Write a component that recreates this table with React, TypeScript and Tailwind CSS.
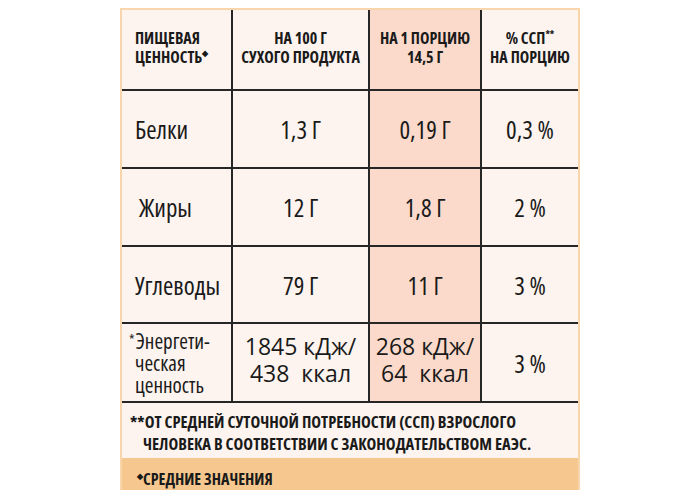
import type { ReactNode } from 'react';

const headFont = "font-['Open_Sans',sans-serif] font-stretch-[82%]";
const noteFont = "font-['Open_Sans',sans-serif] font-stretch-[80%]";
const bodyFont = "font-['Open_Sans',sans-serif] font-stretch-[84%]";
const energyFont = "font-['Open_Sans',sans-serif] font-stretch-[88%]";

type Row = {
  label: ReactNode;
  dry: ReactNode;
  portion: ReactNode;
  pct: string;
  energy?: boolean;
};

const rows: Row[] = [
  { label: 'Белки', dry: '1,3 Г', portion: '0,19 Г', pct: '0,3 %' },
  { label: <span className="pl-1">Жиры</span>, dry: '12 Г', portion: '1,8 Г', pct: '2 %' },
  { label: 'Углеводы', dry: '79 Г', portion: '11 Г', pct: '3 %' },
  {
    label: (
      <span className="block text-[21px] leading-[22px]">
        <span className="relative -left-[6px] -top-[1px] align-top text-[14px]">*</span>
        <span className="-ml-[5px]">Энергети-</span>
        <br />
        ческая
        <br />
        ценность
      </span>
    ),
    dry: (
      <>
        1845 кДж/
        <br />
        438&nbsp;&nbsp;ккал
      </>
    ),
    portion: (
      <>
        268 кДж/
        <br />
        64&nbsp;&nbsp;ккал
      </>
    ),
    pct: '3 %',
    energy: true,
  },
];

function HeadCell({ children, left, pink }: { children: ReactNode; left?: boolean; pink?: boolean }) {
  return (
    <div
      className={`flex items-center whitespace-nowrap pb-1 text-[16px] font-bold uppercase leading-[19px] text-[#1a1a1a] ${headFont} ${
        left ? 'justify-start pl-[13px] text-left' : 'justify-center text-center'
      } ${pink ? 'bg-[#fcdacb]' : 'bg-[#fdf4ef]'}`}
    >
      <div>{children}</div>
    </div>
  );
}

function BodyCell({ children, left, pink, energy }: { children: ReactNode; left?: boolean; pink?: boolean; energy?: boolean }) {
  return (
    <div
      className={`flex items-center whitespace-nowrap text-[#1a1a1a] ${
        energy ? `${energyFont} text-[23px] leading-[27px]` : `${bodyFont} text-[25px] leading-[30px]`
      } ${left ? 'justify-start pl-[13px] text-left' : 'justify-center text-center'} ${
        pink ? 'bg-[#fcdacb]' : 'bg-[#fdf4ef]'
      }`}
    >
      <div className={energy ? '-mt-[5px]' : ''}>{children}</div>
    </div>
  );
}

export default function App() {
  return (
    <div className="min-h-[500px] bg-white pt-[8px]">
      <div className="mx-auto w-[460px] border-x-2 border-t-2 border-[#f8d5aa] bg-[#fdf4ef]">
        <div className="grid grid-cols-[109px_135px_110px_96px] grid-rows-[79px_76px_76px_75px_77px] gap-[2px] bg-[#262626]">
          <HeadCell left>
            Пищевая
            <br />
            ценность<sup className="-top-[7px] text-[8px]">◆</sup>
          </HeadCell>
          <HeadCell>
            На 100 г
            <br />
            сухого продукта
          </HeadCell>
          <HeadCell pink>
            На 1 порцию
            <br />
            14,5 г
          </HeadCell>
          <HeadCell>
            % ССП<sup className="-top-[6px] text-[10px]">**</sup>
            <br />
            на порцию
          </HeadCell>

          {rows.map((r, i) => (
            <div key={i} className="contents">
              <BodyCell left>{r.label}</BodyCell>
              <BodyCell energy={r.energy}>{r.dry}</BodyCell>
              <BodyCell pink energy={r.energy}>{r.portion}</BodyCell>
              <BodyCell>{r.pct}</BodyCell>
            </div>
          ))}
        </div>

        {/* footnote */}
        <div
          className={`h-[57px] whitespace-nowrap border-t-2 border-[#262626] pl-[21px] pt-[8px] text-[16.5px] font-bold uppercase leading-[22px] text-[#1a1a1a] -indent-[13px] ${noteFont}`}
        >
          **от средней суточной потребности (ССП) взрослого
          <br />
          человека в соответствии с законодательством ЕАЭС.
        </div>

        <div
          className={`h-[32px] whitespace-nowrap bg-[#f6c88f] pl-[15px] pt-[12px] text-[16px] font-bold uppercase leading-[18px] text-[#1a1a1a] ${headFont}`}
        >
          <sup className="-top-[6px] text-[8px]">◆</sup>средние значения
        </div>
      </div>
    </div>
  );
}
